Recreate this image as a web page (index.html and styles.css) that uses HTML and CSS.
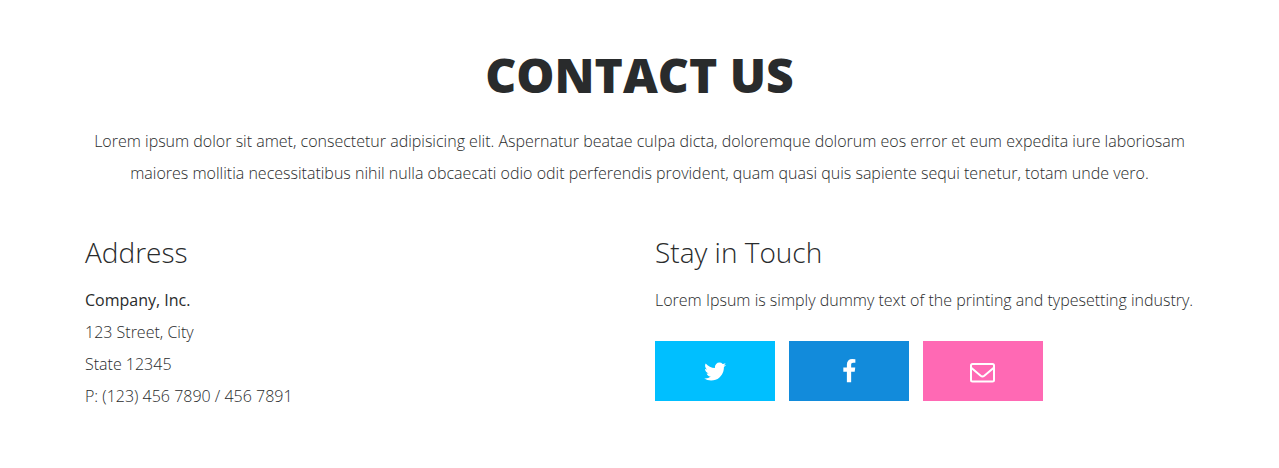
FILE: index.html
```html
<!DOCTYPE html>
<html lang="en">
<head>
<meta charset="utf-8">
<meta name="viewport" content="width=device-width, initial-scale=1">
<title>Contact Us</title>
<link rel="stylesheet" href="styles.css">
</head>
<body>
<section class="contact">
  <header class="intro">
    <h2 class="title">CONTACT US</h2>
    <p class="lead">Lorem ipsum dolor sit amet, consectetur adipisicing elit. Aspernatur beatae culpa dicta, doloremque dolorum eos error et eum expedita iure laboriosam maiores mollitia necessitatibus nihil nulla obcaecati odio odit perferendis provident, quam quasi quis sapiente sequi tenetur, totam unde vero.</p>
  </header>
  <div class="columns">
    <div class="column">
      <h3 class="subtitle">Address</h3>
      <address class="address"><strong class="company">Company, Inc.</strong><br>123 Street, City<br>State 12345<br>P: (123) 456 7890 / 456 7891</address>
    </div>
    <div class="column">
      <h3 class="subtitle">Stay in Touch</h3>
      <p class="text">Lorem Ipsum is simply dummy text of the printing and typesetting industry.</p>
      <nav class="social" aria-label="Social links">
        <a class="button twitter" href="#" aria-label="Twitter"><svg class="icon" viewBox="-40 0 1664 1792"><path d="M1620 408q-67 98-162 167 1 14 1 42 0 130-38 259.500t-115.500 248.500-184.500 210.500-258 146-323 54.500q-271 0-496-145 35 4 78 4 225 0 401-138-105-2-188-64.500t-114-159.500q33 5 61 5 43 0 85-11-112-23-185.500-111.500t-73.500-205.500v-4q68 38 146 41-66-44-105-115t-39-154q0-88 44-163 121 149 294.500 238.500t371.500 99.500q-8-38-8-74 0-134 94.500-228.500t228.500-94.500q140 0 236 102 109-21 205-78-37 115-142 178 93-10 186-50z"/></svg></a>
        <a class="button facebook" href="#" aria-label="Facebook"><svg class="icon" viewBox="0 0 1024 1792"><path d="M959 12v264h-157q-86 0-116 36t-30 108v189h293l-39 296h-254v759h-306v-759h-255v-296h255v-218q0-186 104-288.500t277-102.500q147 0 228 12z"/></svg></a>
        <a class="button email" href="#" aria-label="Email"><svg class="icon outline" viewBox="0 0 26 25"><rect x="1" y="5" width="23" height="17.500" rx="1.500"/><path d="M1.500 9L10.700 16.800Q12.500 18.200 14.300 16.800L23.500 9"/></svg></a>
      </nav>
    </div>
  </div>
</section>
</body>
</html>
```
FILE: styles.css
```css
* { box-sizing: border-box; }
body {
  margin: 0;
  background: #fff;
  color: #292b2c;
  font-family: "Open Sans", sans-serif;
  font-size: 16px;
  font-weight: 300;
  line-height: 32px;
}
.contact { max-width: 1139px; margin: 0 auto; padding: 47px 15px 48px; }
.intro { text-align: center; }
.title { margin: 0 0 22px; font-size: 48px; font-weight: 800; line-height: 56px; }
.lead, .text { margin: 0; }
.columns { display: grid; grid-template-columns: 1fr 1fr; gap: 31px; margin-top: 47px; }
.subtitle { margin: 0 0 16px; font-size: 28px; font-weight: 300; line-height: 32px; }
.address { font-style: normal; }
.company { font-weight: 400; }
.social { display: flex; flex-wrap: wrap; gap: 14px; margin-top: 25px; }
.button { display: flex; align-items: center; justify-content: center; width: 120px; height: 60px; color: #fff; }
.icon { height: 25px; fill: currentColor; }
.outline { fill: none; stroke: currentColor; stroke-width: 2; }
.twitter { background: #00bfff; }
.facebook { background: #128bdb; }
.email { background: #ff69b4; }
```
